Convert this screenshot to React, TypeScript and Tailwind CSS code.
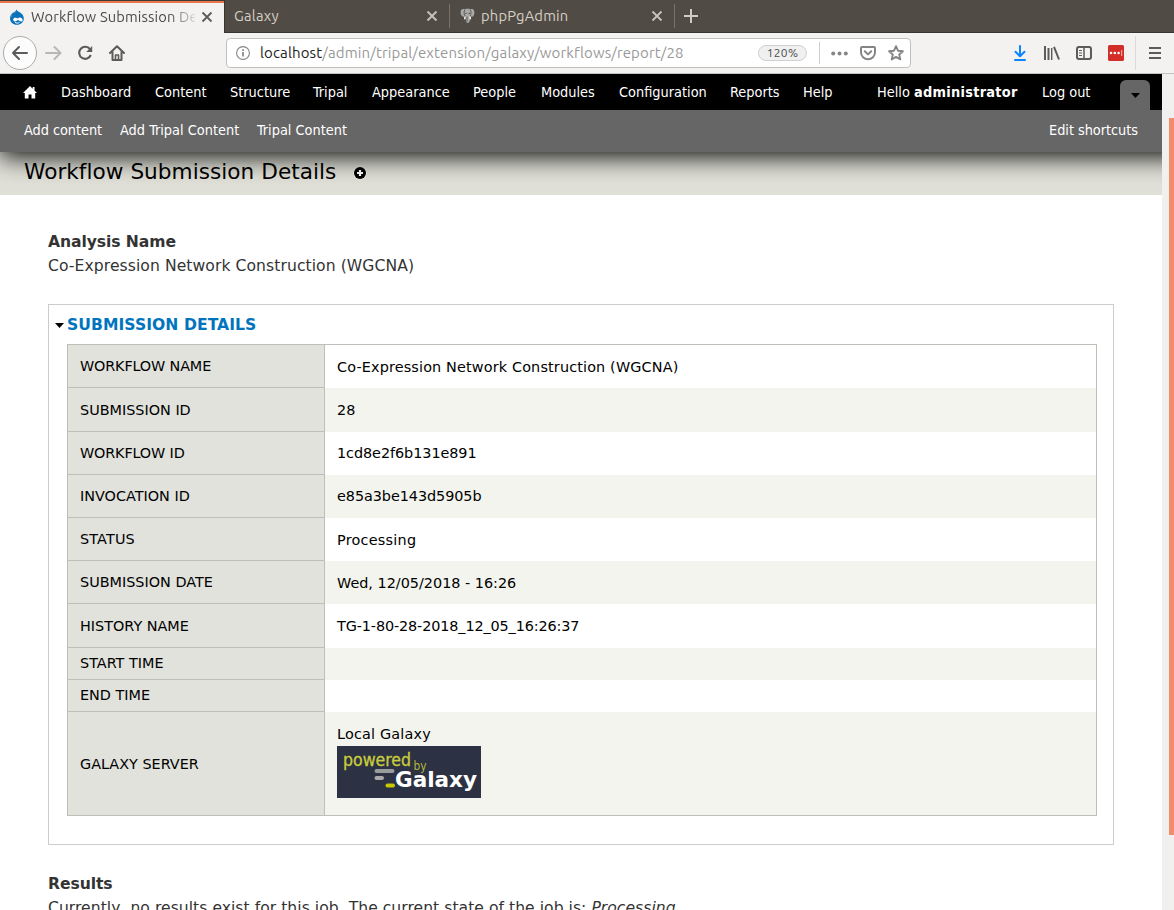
import React from "react";

const menu: [string, string][] = [
  ["Dashboard", "w-[94px]"],
  ["Content", "w-[75px]"],
  ["Structure", "w-[83px]"],
  ["Tripal", "w-[59px]"],
  ["Appearance", "w-[101px]"],
  ["People", "w-[68px]"],
  ["Modules", "w-[78px]"],
  ["Configuration", "w-[111px]"],
  ["Reports", "w-[73px]"],
  ["Help", "w-[74px]"],
];

type Row = { label: string; value: string; h: string; lp?: string; vp?: string; ls?: string; vs?: string };

const rows: Row[] = [
  { label: "WORKFLOW NAME", value: "Co-Expression Network Construction (WGCNA)", h: "h-[43px]", vp: "pt-px", ls: "tracking-[-0.15px]", vs: "tracking-[0.15px]" },
  { label: "SUBMISSION ID", value: "28", h: "h-[44px]" },
  { label: "WORKFLOW ID", value: "1cd8e2f6b131e891", h: "h-[43px]", vp: "pb-px", ls: "tracking-[-0.15px]", vs: "tracking-[-0.06px]" },
  { label: "INVOCATION ID", value: "e85a3be143d5905b", h: "h-[43px]", vp: "pb-px", vs: "tracking-[-0.06px]" },
  { label: "STATUS", value: "Processing", h: "h-[43px]", vp: "pt-px", ls: "tracking-[0.15px]", vs: "tracking-[0.25px]" },
  { label: "SUBMISSION DATE", value: "Wed, 12/05/2018 - 16:26", h: "h-[43px]", vp: "pt-px" },
  { label: "HISTORY NAME", value: "TG-1-80-28-2018_12_05_16:26:37", h: "h-[44px]", vs: "tracking-[-0.12px]" },
  { label: "START TIME", value: "", h: "h-[32px]", lp: "pb-[2px]" },
  { label: "END TIME", value: "", h: "h-[32px]", lp: "pb-[2px]" },
  { label: "GALAXY SERVER", value: "Local Galaxy", h: "h-[104px]", vp: "pb-[6px]", vs: "tracking-[0.18px]" },
];

function Close({ className }: { className: string }) {
  return (
    <svg width="12" height="12" viewBox="0 0 12 12" className={className} fill="none" stroke="currentColor" strokeWidth="1.8">
      <path d="M1.5 1.5l9 9M10.500 1.500l-9 9" />
    </svg>
  );
}

function DrupalIcon() {
  return (
    <svg width="16" height="16" viewBox="0 0 16 16">
      <path d="M7.3.2c.5 1.6 1.7 2.1 3 2.9C12.700 4.500 14.800 6.300 14.800 9.500c0 3.700-3 6.300-6.900 6.300S1 13.100 1 9.500c0-2.700 1.500-4.700 3.400-5.900C6 2.600 7.100 2 7.300.2z" fill="#0a72b8" />
      <path d="M4.500 4.200C6.500 4 7.300 2.800 7.500 1.500c-1 2.600-5.600 3.200-5.600 7.500C2.600 7 3.300 5.500 4.500 4.200z" fill="#7cc4ec" />
      <path d="M10.600 8.600c1.400-.3 3 .8 3 2.300s-.8 1.900-1.800 1.500c-1.100-.5-1.900-1.300-3-1.100-1.500.3-1.700 1.300-3.100 1.100-1.100-.2-1.800-1.200-1.400-2.300.5-1.400 2.400-1.600 3.700-.8.800.5 1.400-.5 2.600-.7z" fill="#fff" />
      <path d="M6 13.300c1.300 1.100 3.300 1.100 4.600-.1" fill="none" stroke="#fff" strokeWidth="1" />
    </svg>
  );
}

function ElephantIcon() {
  return (
    <svg width="15" height="16" viewBox="0 0 15 16">
      <path d="M.7 3.200C1.200 1 3.300.8 4.800 1.300 6.500.7 8.800.7 10.300 1.300c1.500-.5 3.500-.3 4 1.900.4 2.200-.4 5-2 5.500-.9.200-1.300-.3-1.700-.6-.4 1.400-.9 1.900-.8 3.200.1 1.500-.1 3.600-1.900 3.600-2 0-2-2-1.900-3.600 0-1.300-.6-1.900-1-3.200-.5.400-.9.800-1.700.6C1.200 8.200.2 5.400.7 3.200z" fill="#aaa9a7" />
      <path d="M4.800 1.600c-1 2-.9 4.500.2 6.500M10.300 1.600c1 2 .9 4.500-.2 6.500M7 8.500v5" fill="none" stroke="#55534e" strokeWidth=".9" />
      <circle cx="6" cy="5.400" r=".7" fill="#444" />
      <circle cx="9.200" cy="5.400" r=".7" fill="#444" />
      <path d="M5 8.500l-.3 2.900M10 8.500l.4 2.900" stroke="#f4f4f4" strokeWidth="1.500" />
    </svg>
  );
}

function TabBar() {
  return (
    <div className="flex h-[33px] bg-[#504c45] text-[14.7px] tracking-[0.1px]">
      <div className="flex w-[224px] flex-col bg-[#f4f2f1] text-[#4a4a4a]">
        <div className="h-px bg-[#3c3b37]" />
        <div className="h-[2px] bg-[#e9764b]" />
        <div className="flex h-[28px] items-center pl-[9px]">
          <DrupalIcon />
          <div className="ml-[6px] w-[164px] overflow-hidden whitespace-nowrap tracking-[0.13px] [mask-image:linear-gradient(to_right,#000_138px,transparent_168px)]">
            Workflow Submission Details
          </div>
          <Close className="ml-[6px] text-[#5c5b59]" />
        </div>
      </div>
      <div className="flex h-[33px] flex-1 items-center border-b border-l border-[#37352f] text-[#d6d0c6]">
        <div className="flex w-[224px] items-center pl-[9px]">
          <span className="w-[192px] pt-px tracking-[0.25px]">Galaxy</span>
          <Close className="text-[#c9c4bc]" />
        </div>
        <div className="h-6 w-px bg-[#77736b]" />
        <div className="flex w-[224px] items-center pl-[10px]">
          <ElephantIcon />
          <span className="ml-[6px] w-[170px] pt-px tracking-[0.2px]">phpPgAdmin</span>
          <Close className="text-[#c9c4bc]" />
        </div>
        <div className="h-6 w-px bg-[#77736b]" />
        <svg width="14" height="14" viewBox="0 0 14 14" className="ml-[9px]" stroke="#d0cbc4" strokeWidth="2">
          <path d="M7 0v14M0 7h14" />
        </svg>
      </div>
    </div>
  );
}

function NavBar() {
  return (
    <div className="flex h-[41px] items-center border-b border-[#c4c2c0] bg-[#f4f2f1] text-[#5b5b5b]">
      <div className="ml-[3px] flex size-[34px] items-center justify-center rounded-full border border-[#adaba9] bg-[#fcfcfc]">
        <svg width="18" height="16" viewBox="0 0 18 16" fill="none" stroke="currentColor" strokeWidth="2" strokeLinecap="round" strokeLinejoin="round">
          <path d="M16 8H2M8 2L2 8l6 6" />
        </svg>
      </div>
      <svg width="18" height="16" viewBox="0 0 18 16" className="ml-[8px]" fill="none" stroke="#b9b7b5" strokeWidth="2" strokeLinecap="round" strokeLinejoin="round">
        <path d="M1 8h14M9.500 2l6 6-6 6" />
      </svg>
      <svg width="16" height="16" viewBox="0 0 16 16" className="ml-[14px]" fill="none" stroke="currentColor" strokeWidth="2.100">
        <path d="M13 4.200A6 6 0 1 0 13.800 10" />
        <path d="M15.200 1v6h-6z" fill="currentColor" stroke="none" />
      </svg>
      <svg width="16" height="16" viewBox="0 0 16 16" className="ml-[16px]" fill="none" stroke="currentColor" strokeWidth="2" strokeLinejoin="round" strokeLinecap="round">
        <path d="M1 8l7-6.800L15 8M3.500 7v8h9V7" />
        <path d="M6.500 14.500V10h3v4.500" strokeWidth="1.600" />
      </svg>
      <div className="ml-[101px] flex h-[30px] w-[685px] items-center rounded-[4px] border border-[#c3bfbc] bg-white">
        <svg width="14" height="14" viewBox="0 0 14 14" className="ml-[9px]" fill="none" stroke="#858585">
          <circle cx="7" cy="7" r="6.400" strokeWidth="1.100" />
          <path d="M7 6v4.500M7 3.300v1.600" strokeWidth="1.700" />
        </svg>
        <div className="ml-[10px] w-[498px] pt-px text-[15px] tracking-[0.14px] whitespace-nowrap text-[#999]">
          <span className="text-[#222]">localhost</span>/admin/tripal/extension/galaxy/workflows/report/28
        </div>
        <div className="flex h-4 w-[49px] items-center justify-center rounded-full border border-[#d0d0d0] bg-[#f0f0f0] text-[12px] tracking-[0.3px] text-[#4d4d4d]">120%</div>
        <div className="ml-3 h-[22px] w-px bg-[#d0cecc]" />
        <svg width="17" height="5" viewBox="0 0 17 5" className="ml-[11px]" fill="#858585">
          <circle cx="2.200" cy="2.500" r="2" /><circle cx="8.500" cy="2.500" r="2" /><circle cx="14.800" cy="2.500" r="2" />
        </svg>
        <svg width="16" height="16" viewBox="0 0 16 16" className="ml-[12px]" fill="none" stroke="#858585" strokeWidth="2" strokeLinejoin="round" strokeLinecap="round">
          <path d="M2 2h12a1 1 0 0 1 1 1v4.300a7 7 0 0 1-14 0V3a1 1 0 0 1 1-1z" />
          <path d="M4.800 6.300L8 9.400l3.200-3.100" />
        </svg>
        <svg width="16" height="16" viewBox="0 0 16 16" className="ml-3" fill="none" stroke="#858585" strokeWidth="1.900" strokeLinejoin="round">
          <path d="M8 1.200l2 4.500 4.900.5-3.700 3.300 1.100 4.900L8 11.900l-4.300 2.500 1.100-4.900L1.100 6.200 6 5.700z" />
        </svg>
      </div>
      <svg width="12" height="16" viewBox="0 0 12 16" className="ml-[103px]" fill="none" stroke="#0a84ff" strokeWidth="2" strokeLinecap="round" strokeLinejoin="round">
        <path d="M6 1v10M1.500 6.800L6 11.300l4.500-4.500M1 15h10" />
      </svg>
      <svg width="16" height="14" viewBox="0 0 16 14" className="ml-[18px]" fill="none" stroke="currentColor" strokeWidth="2">
        <path d="M1 0v14M4.500 2v12M10 .8l5 12.700" /><path d="M7.700 2v12" strokeWidth="1.400" />
      </svg>
      <svg width="16" height="14" viewBox="0 0 16 14" className="ml-4" fill="none" stroke="currentColor" strokeWidth="2">
        <rect x="1" y="1" width="14" height="12" rx="2" />
        <path d="M8 1v12" strokeWidth="1.500" /><path d="M3 4.500h3M3 7h3M3 9.500h3" strokeWidth="1" />
      </svg>
      <svg width="16" height="16" viewBox="0 0 16 16" className="ml-4">
        <rect width="16" height="16" rx="1.500" fill="#d32d27" />
        <circle cx="3" cy="8" r="1.300" fill="#fff" /><circle cx="6.800" cy="8" r="1.300" fill="#fff" /><circle cx="10.600" cy="8" r="1.300" fill="#fff" />
        <path d="M13.700 5v6" stroke="#f6b9b6" />
      </svg>
      <div className="ml-[11px] h-[34px] w-px bg-[#dcdad8]" />
      <svg width="12" height="12" viewBox="0 0 12 12" className="ml-[13px]" stroke="currentColor" strokeWidth="2">
        <path d="M0 1h12M0 6h12M0 11h12" />
      </svg>
    </div>
  );
}

function AdminMenu() {
  return (
    <div className="relative z-10 -mr-6 h-[78px] pr-6 text-[14.4px] text-white shadow-[0_3.6px_24px_#000] [font-family:'DejaVu_Sans_Condensed','DejaVu_Sans',sans-serif] [font-stretch:condensed]">
      <div className="-mr-6 flex h-9 items-center bg-black whitespace-nowrap">
        <svg width="14" height="13" viewBox="0 0 14 13" className="mr-[24px] ml-[23px]" fill="#fff">
          <path d="M7 0L0 7h1.800v5.500h3.700V8.500h3v4h3.700V7H14l-2.500-2.500V1H9.700v1.700z" />
        </svg>
        {menu.map(([label, w]) => (
          <a key={label} className={`${w} pt-px`}>{label}</a>
        ))}
        <a className="w-[165px] pt-px">Hello <b className="tracking-[0.28px]">administrator</b></a>
        <a className="w-[78px] pt-px">Log out</a>
        <div className="mt-[6px] flex h-[30px] w-[30px] items-center justify-center rounded-t-[6px] bg-[#666]">
          <svg width="9" height="5" viewBox="0 0 9 5" className="mt-px"><path d="M0 0h9L4.500 5z" /></svg>
        </div>
      </div>
      <div className="-mr-6 flex h-[42px] bg-[#666] pt-[10px] pl-6 leading-5 whitespace-nowrap">
        <a className="w-[96px] tracking-[-0.06px]">Add content</a>
        <a className="w-[137px]">Add Tripal Content</a>
        <a className="w-[792px]">Tripal Content</a>
        <a className="tracking-[-0.04px]">Edit shortcuts</a>
      </div>
    </div>
  );
}

function GalaxyLogo() {
  return (
    <svg width="144" height="52" viewBox="0 0 144 52" className="mt-[2px] block">
      <rect width="144" height="52" fill="#2c3143" />
      <text x="6" y="20" fontSize="17" fill="#c9cd3d" stroke="#c9cd3d" strokeWidth=".3" fontFamily="DejaVu Sans Condensed, DejaVu Sans, sans-serif" textLength="68" lengthAdjust="spacingAndGlyphs">powered</text>
      <text x="76.500" y="24" fontSize="12" fill="#b4b83a" fontFamily="DejaVu Sans, sans-serif" textLength="13" lengthAdjust="spacingAndGlyphs">by</text>
      <rect x="37.500" y="23" width="20" height="4" rx="2" fill="#9b9c9c" />
      <rect x="37.500" y="30" width="9.500" height="4" rx="2" fill="#aaa" />
      <rect x="48.500" y="37.500" width="9.500" height="4" rx="2" fill="#c8c800" />
      <text x="58" y="41" fontSize="20.500" fontWeight="bold" fill="#fff" fontFamily="DejaVu Sans, sans-serif" textLength="82" lengthAdjust="spacingAndGlyphs">Galaxy</text>
    </svg>
  );
}

function DetailsTable() {
  return (
    <div className="mt-[7px] ml-[18px] w-[1030px] border border-b-0 border-[#bebfb9] text-[14.4px] text-black">
      {rows.map((r, i) => (
        <div key={r.label} className={`flex ${r.h}`}>
          <div className={`flex w-[257px] items-center border-r border-b border-[#bebfb9] bg-[#e1e2dc] pl-3 ${r.lp ?? ""}`}>
            <span className={r.ls ?? ""}>{r.label}</span>
          </div>
          <div
            className={`flex flex-1 flex-col justify-center pl-3 whitespace-nowrap ${r.vp ?? ""} ${i % 2 ? "bg-[#f3f4ee]" : "bg-white"} ${i === rows.length - 1 ? "border-b border-[#bebfb9]" : ""}`}
          >
            <span className={`leading-5 ${r.vs ?? ""}`}>{r.value}</span>
            {i === rows.length - 1 && <GalaxyLogo />}
          </div>
        </div>
      ))}
    </div>
  );
}

export default function App() {
  return (
    <div className="h-[910px] w-[1174px] overflow-hidden bg-white [font-family:Ubuntu,'Noto_Sans',sans-serif]">
      <TabBar />
      <NavBar />
      <div className="flex h-[836px]">
        <main className="w-[1162px] overflow-hidden [font-family:'DejaVu_Sans',sans-serif]">
          <AdminMenu />
          <header className="flex h-[43px] items-center bg-[#e0e0d8] pb-[3px] pl-6">
            <h1 className="text-[21.600px] tracking-[0.04px] text-black">Workflow Submission Details</h1>
            <svg width="14" height="14" viewBox="0 0 14 14" className="mt-px ml-[17px]">
              <circle cx="7" cy="7" r="6.800" fill="#fff" opacity=".6" />
              <circle cx="7" cy="7" r="6" />
              <path d="M7 4v6M4 7h6" stroke="#fff" strokeWidth="2.200" />
            </svg>
          </header>
          <div className="px-12 pt-[35px] text-[15.600px] leading-6 text-[#333]">
            <p className="font-bold tracking-[-0.08px]">Analysis Name</p>
            <p className="tracking-[0.07px]">Co-Expression Network Construction (WGCNA)</p>
            <section className="mt-[26px] h-[541px] border border-[#ccc] pt-[8px]">
              <div className="flex items-center pl-[6px] font-bold tracking-[0.05px] text-[#0074bd]">
                <svg width="9" height="5" viewBox="0 0 9 5" className="mt-px mr-[3px]"><path d="M0 0h9L4.500 5z" /></svg>
                SUBMISSION DETAILS
              </div>
              <DetailsTable />
            </section>
            <p className="mt-[27px] font-bold tracking-[-0.08px]">Results</p>
            <p className="tracking-[0.035px]">Currently, no results exist for this job. The current state of the job is: <i>Processing</i>.</p>
          </div>
        </main>
        <div className="w-3 bg-[#f1f0ee] pt-[44px] pl-[7px]">
          <div className="h-[717px] bg-[#f08c69]" />
        </div>
      </div>
    </div>
  );
}
